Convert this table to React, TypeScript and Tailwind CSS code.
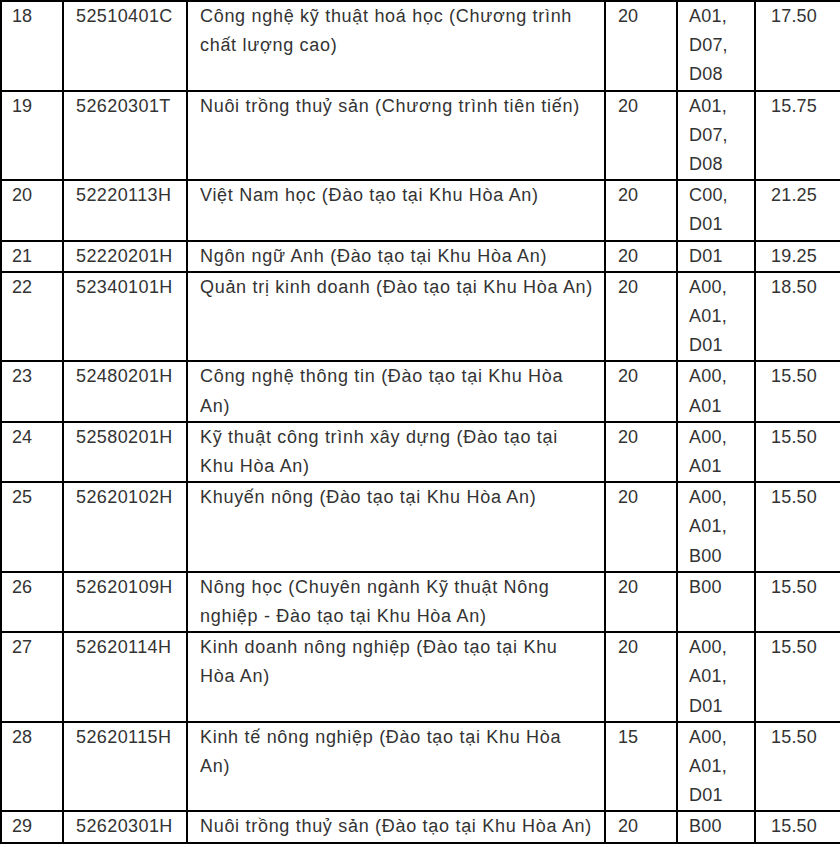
const rows: Array<[string, string, string[], string, string[], string]> = [
  ["18", "52510401C", ["Công nghệ kỹ thuật hoá học (Chương trình", "chất lượng cao)"], "20", ["A01,", "D07,", "D08"], "17.50"],
  ["19", "52620301T", ["Nuôi trồng thuỷ sản (Chương trình tiên tiến)"], "20", ["A01,", "D07,", "D08"], "15.75"],
  ["20", "52220113H", ["Việt Nam học (Đào tạo tại Khu Hòa An)"], "20", ["C00,", "D01"], "21.25"],
  ["21", "52220201H", ["Ngôn ngữ Anh (Đào tạo tại Khu Hòa An)"], "20", ["D01"], "19.25"],
  ["22", "52340101H", ["Quản trị kinh doanh (Đào tạo tại Khu Hòa An)"], "20", ["A00,", "A01,", "D01"], "18.50"],
  ["23", "52480201H", ["Công nghệ thông tin (Đào tạo tại Khu Hòa", "An)"], "20", ["A00,", "A01"], "15.50"],
  ["24", "52580201H", ["Kỹ thuật công trình xây dựng (Đào tạo tại", "Khu Hòa An)"], "20", ["A00,", "A01"], "15.50"],
  ["25", "52620102H", ["Khuyến nông (Đào tạo tại Khu Hòa An)"], "20", ["A00,", "A01,", "B00"], "15.50"],
  ["26", "52620109H", ["Nông học (Chuyên ngành Kỹ thuật Nông", "nghiệp - Đào tạo tại Khu Hòa An)"], "20", ["B00"], "15.50"],
  ["27", "52620114H", ["Kinh doanh nông nghiệp (Đào tạo tại Khu", "Hòa An)"], "20", ["A00,", "A01,", "D01"], "15.50"],
  ["28", "52620115H", ["Kinh tế nông nghiệp (Đào tạo tại Khu Hòa", "An)"], "15", ["A00,", "A01,", "D01"], "15.50"],
  ["29", "52620301H", ["Nuôi trồng thuỷ sản (Đào tạo tại Khu Hòa An)"], "20", ["B00"], "15.50"],
];

function Lines({ items }: { items: string[] }) {
  return (
    <>
      {items.map((line, i) => (
        <span key={i} className="block whitespace-nowrap">
          {line}
        </span>
      ))}
    </>
  );
}

export default function App() {
  const cell = "border-2 border-black align-top py-0 leading-[29.2px]";
  return (
    <div className="bg-white w-[840px] h-[847px] overflow-hidden">
      <table
        className="table-fixed border-collapse w-[840px] text-[18px] text-[#333333]"
        style={{ fontFamily: '"Liberation Sans", Arial, sans-serif' }}
      >
        <colgroup>
          <col className="w-[62px]" />
          <col className="w-[124px]" />
          <col className="w-[418px]" />
          <col className="w-[72px]" />
          <col className="w-[78px]" />
          <col className="w-[86px]" />
        </colgroup>
        <tbody>
          {rows.map(([stt, code, name, quota, groups, score]) => (
            <tr key={stt}>
              <td className={`${cell} px-[10px]`}>{stt}</td>
              <td className={`${cell} px-[12px] tracking-[0.4px]`}>{code}</td>
              <td className={`${cell} px-[12px] tracking-[0.7px]`}>
                <Lines items={name} />
              </td>
              <td className={`${cell} px-[12px]`}>{quota}</td>
              <td className={`${cell} px-[11px] tracking-[0.2px]`}>
                <Lines items={groups} />
              </td>
              <td className={`${cell} pl-[15px] tracking-[0.2px]`}>{score}</td>
            </tr>
          ))}
        </tbody>
      </table>
    </div>
  );
}
